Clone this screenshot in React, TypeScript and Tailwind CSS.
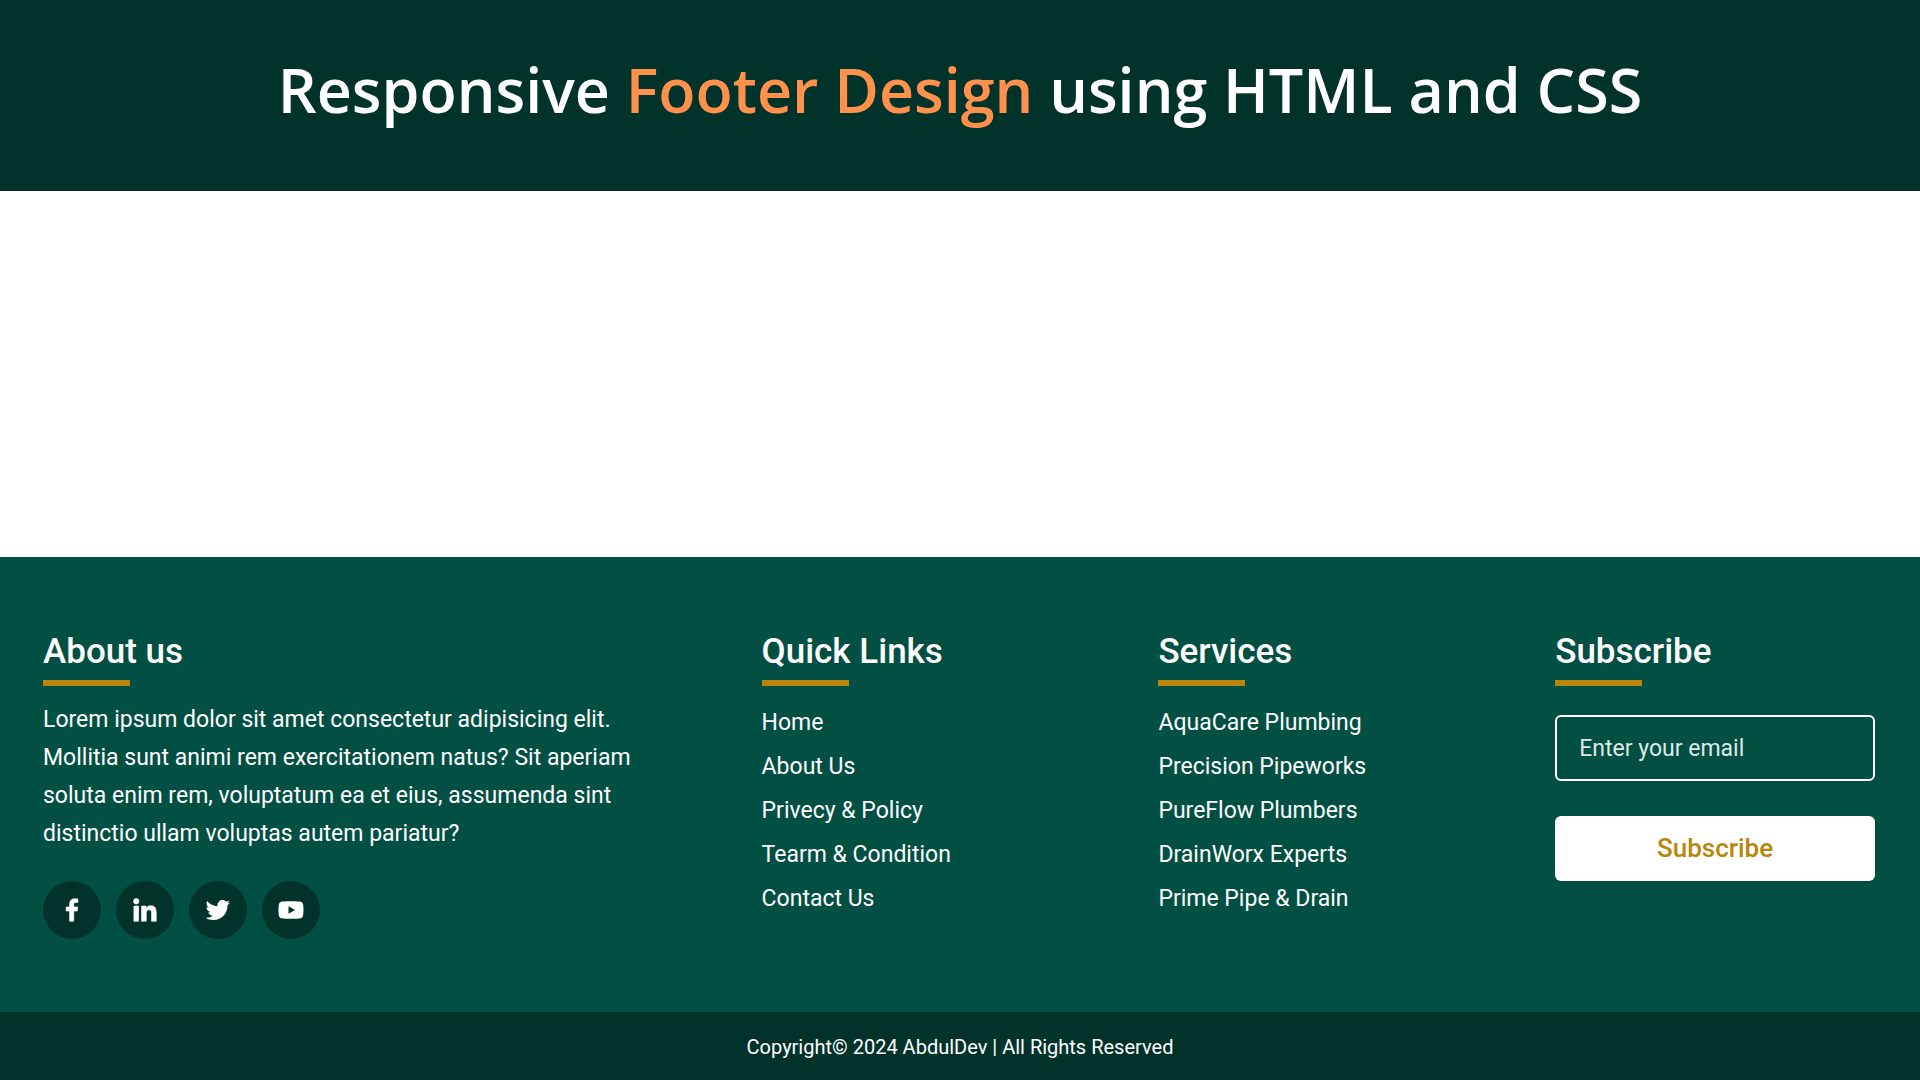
import React from 'react';
import {
  BiLogoFacebook,
  BiLogoLinkedin,
  BiLogoTwitter,
  BiLogoYoutube,
} from 'react-icons/bi';

const socials = [
  { name: 'Facebook', Icon: BiLogoFacebook, style: 'stroke-current stroke-[0.5px]' },
  { name: 'LinkedIn', Icon: BiLogoLinkedin, style: 'stroke-current stroke-[0.5px]' },
  { name: 'Twitter', Icon: BiLogoTwitter, style: '' },
  { name: 'YouTube', Icon: BiLogoYoutube, style: '' },
];

const quickLinks = ['Home', 'About Us', 'Privecy & Policy', 'Tearm & Condition', 'Contact Us'];

const services = [
  'AquaCare Plumbing',
  'Precision Pipeworks',
  'PureFlow Plumbers',
  'DrainWorx Experts',
  'Prime Pipe & Drain',
];

const ColumnTitle = ({ children }: { children: React.ReactNode }) => (
  <h2 className="mb-[15px] text-[35px] leading-[44px] font-medium">
    {children}
    <span className="mt-[6px] block h-[6px] w-[87px] bg-[#b8860b]" />
  </h2>
);

const LinkList = ({ title, links }: { title: string; links: string[] }) => (
  <nav>
    <ColumnTitle>{title}</ColumnTitle>
    <ul>
      {links.map(link => (
        <li key={link} className="text-[23px] leading-[44px]">
          <a href="#" className="hover:text-[#b8860b]">{link}</a>
        </li>
      ))}
    </ul>
  </nav>
);

export default function App() {
  return (
    <div className="flex min-h-screen flex-col bg-white font-['Roboto',sans-serif] text-white">
      <header className="bg-[#01332b] px-6 pt-[50px] pb-[61px] text-center">
        <h1 className="font-['Open_Sans',sans-serif] text-[61px] leading-[80px] font-semibold">
          Responsive <span className="text-[#ff914d]">Footer Design</span> using HTML and CSS
        </h1>
      </header>

      <main className="flex-1" />

      <footer>
        <div className="grid grid-cols-1 gap-[77px] bg-[#024f43] py-[73px] pr-[45px] pl-[43px] lg:grid-cols-[642fr_320fr_320fr_320fr]">
          {/* About */}
          <section>
            <ColumnTitle>About us</ColumnTitle>
            <p className="max-w-[600px] text-[23px] leading-[38px]">
              Lorem ipsum dolor sit amet consectetur adipisicing elit. Mollitia sunt animi rem
              exercitationem natus? Sit aperiam soluta enim rem, voluptatum ea et eius, assumenda
              sint distinctio ullam voluptas autem pariatur?
            </p>
            <div className="mt-7 flex gap-[15px]">
              {socials.map(({ name, Icon, style }) => (
                <a
                  key={name}
                  href="#"
                  aria-label={name}
                  className="flex size-[58px] items-center justify-center rounded-full bg-[#01332b]"
                >
                  <Icon className={`size-[30px] ${style}`} />
                </a>
              ))}
            </div>
          </section>

          <LinkList title="Quick Links" links={quickLinks} />
          <LinkList title="Services" links={services} />

          {/* Subscribe */}
          <section>
            <ColumnTitle>Subscribe</ColumnTitle>
            <form className="pt-[14px]" onSubmit={e => e.preventDefault()}>
              <input
                type="email"
                aria-label="Email"
                placeholder="Enter your email"
                className="block h-[66px] w-full rounded-[6px] border-2 border-white bg-transparent px-[22px] text-[23px] outline-none placeholder:text-[#dfe8e6]"
              />
              <button
                type="submit"
                className="mt-[35px] block h-[65px] w-full rounded-[6px] bg-white text-[26px] font-medium text-[#b8860b]"
              >
                Subscribe
              </button>
            </form>
          </section>
        </div>

        <p className="bg-[#01332b] pt-[21px] pb-[19px] text-center text-[20px] leading-[28px]">
          Copyright© 2024 AbdulDev | All Rights Reserved
        </p>
      </footer>
    </div>
  );
}
